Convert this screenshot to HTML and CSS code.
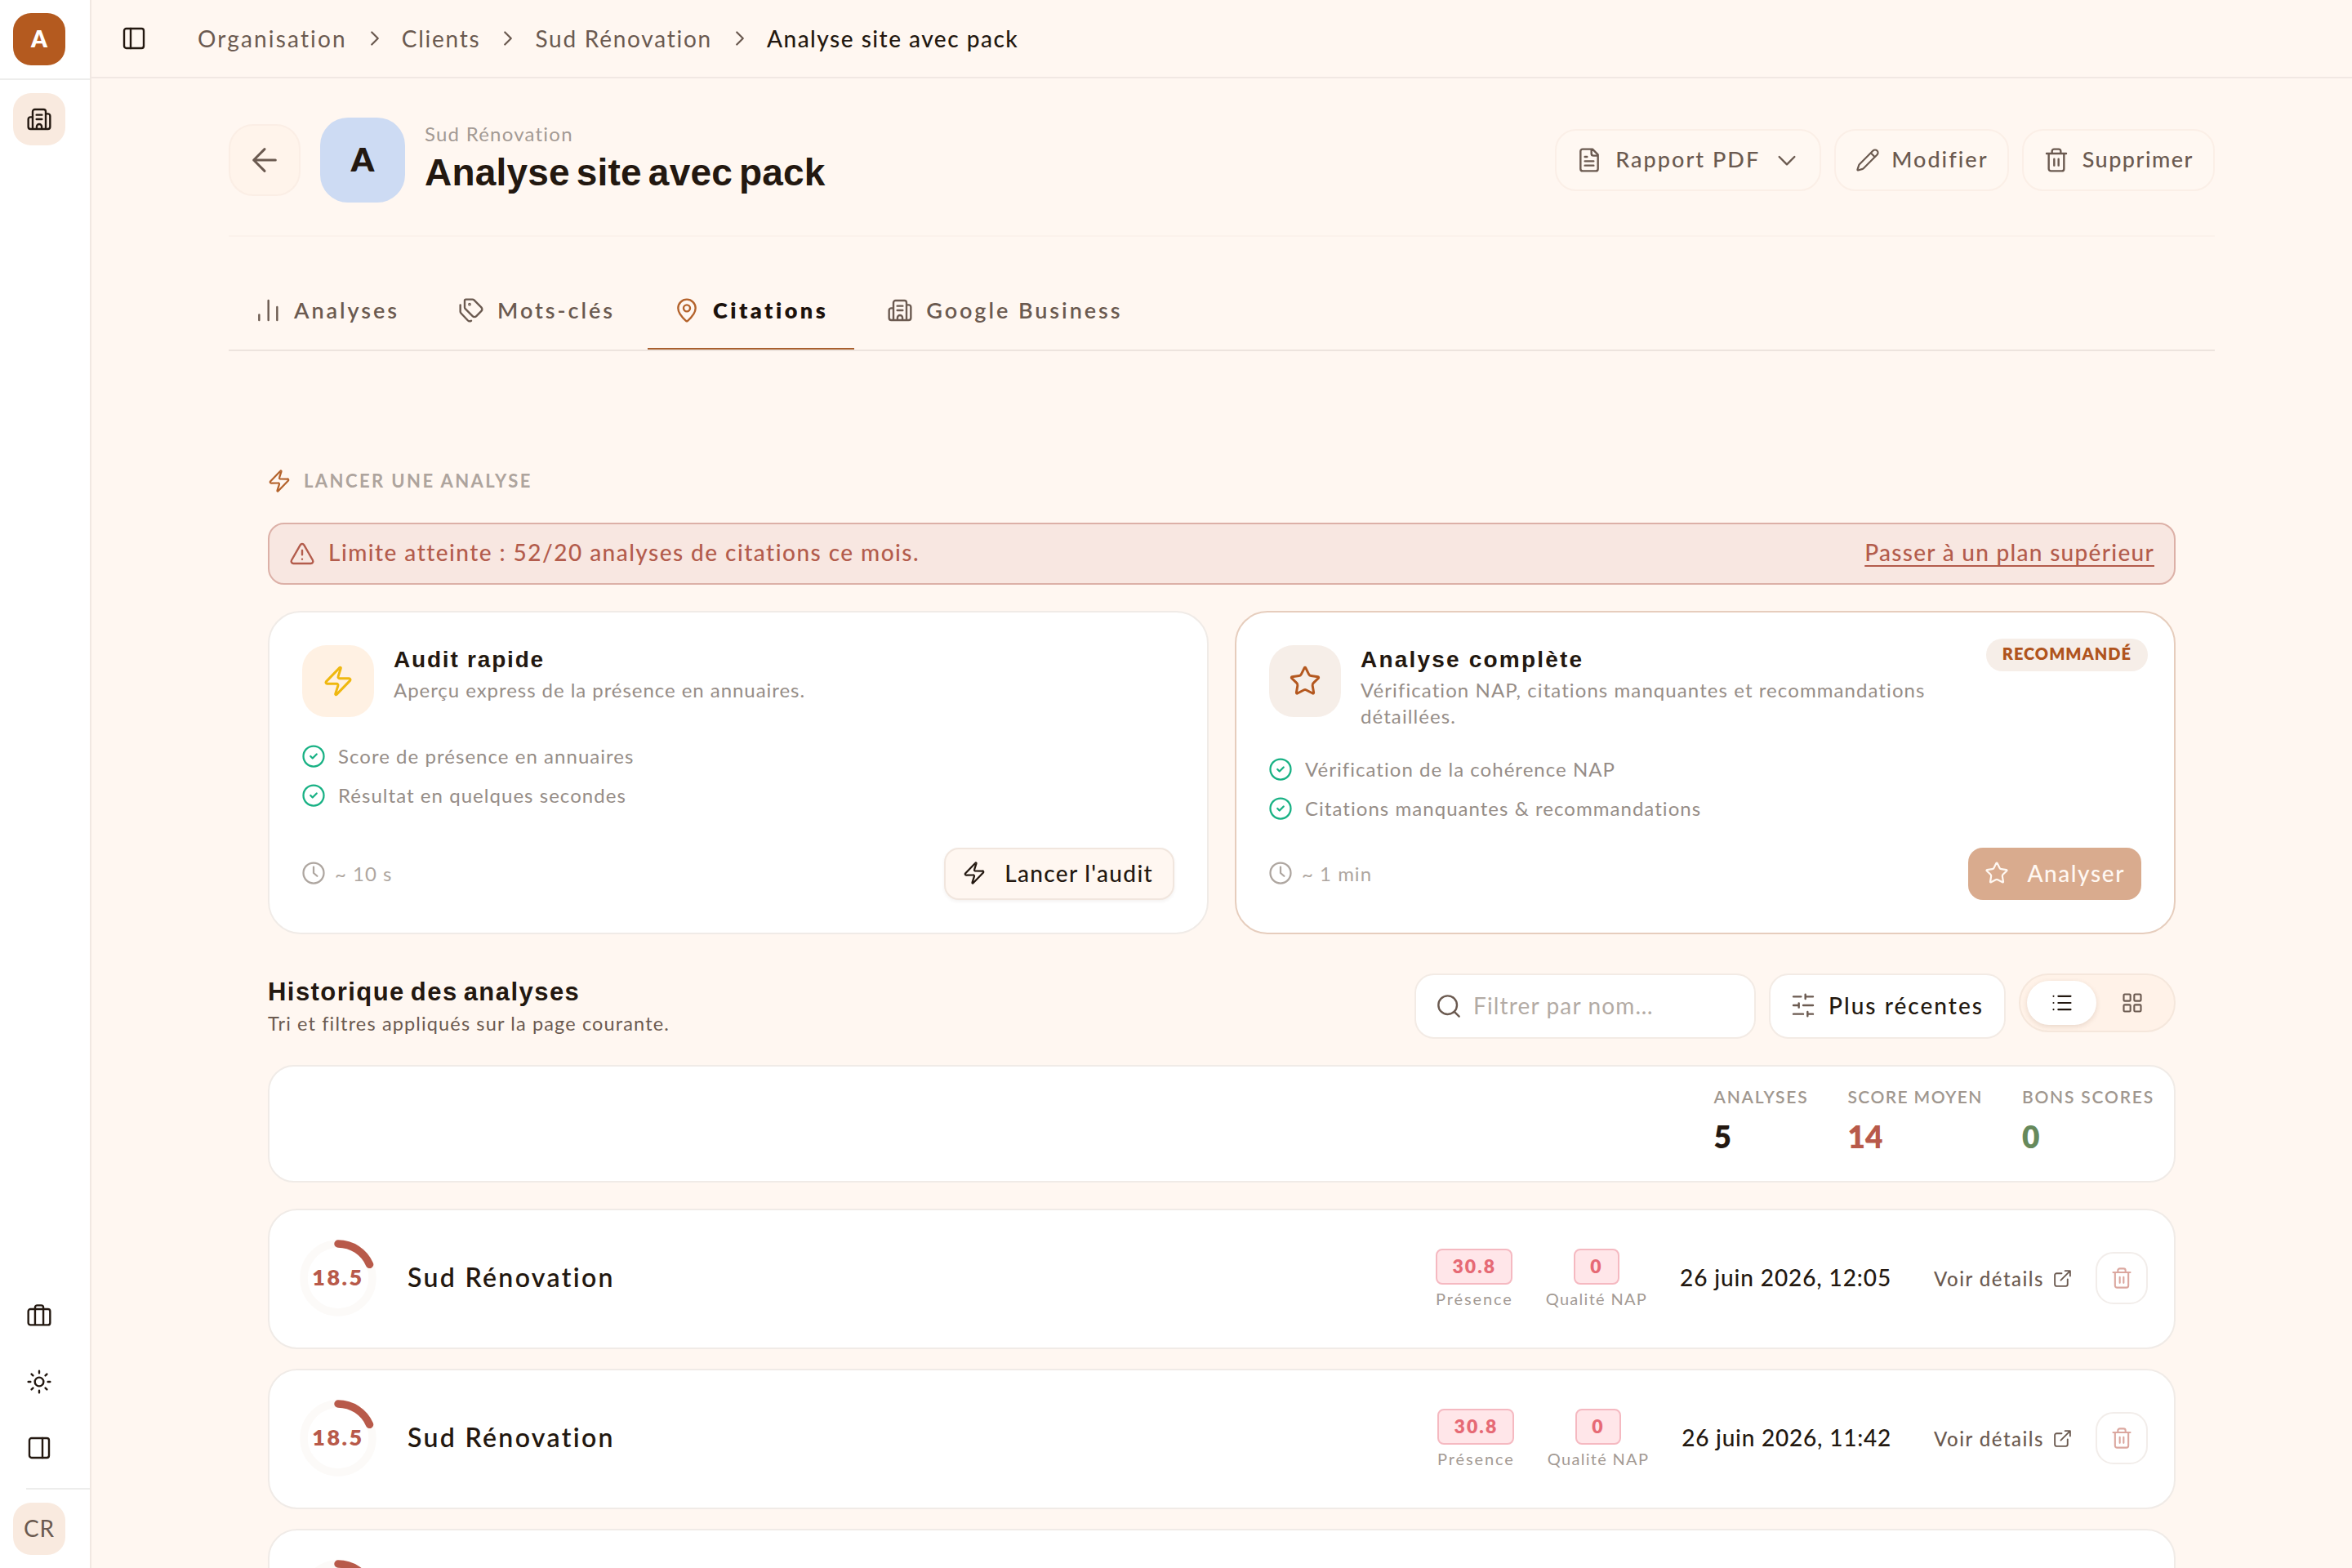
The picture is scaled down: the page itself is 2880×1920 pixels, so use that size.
FILE: index.html
```
<!DOCTYPE html>
<html lang="fr">
<head>
  <meta charset="UTF-8" />
  <meta name="viewport" content="width=device-width, initial-scale=1" />
  <title>Analyse site avec pack</title>
  <link rel="stylesheet" href="styles.css">
</head>
<body>

  <!-- Icônes partagées -->
  <svg class="sprite" aria-hidden="true">
    <symbol id="i-building" viewBox="0 0 24 24"><path d="M6 21V5a2 2 0 0 1 2-2h8a2 2 0 0 1 2 2v16M6 10H4a2 2 0 0 0-2 2v7a2 2 0 0 0 2 2h16a2 2 0 0 0 2-2V9a2 2 0 0 0-2-2h-2M9.7 21v-2.200a2.300 2.300 0 0 1 4.600 0V21M9.500 8h5M9.500 12h5"/></symbol>
    <symbol id="i-panel" viewBox="0 0 24 24"><rect x="3" y="3" width="18" height="18" rx="2"/><path d="M9 3v18"/></symbol>
    <symbol id="i-panel-right" viewBox="0 0 24 24"><rect x="3" y="3" width="18" height="18" rx="2"/><path d="M15 3v18"/></symbol>
    <symbol id="i-case" viewBox="0 0 24 24"><rect x="2" y="6" width="20" height="14.500" rx="2"/><path d="M8.200 20V4.500a2 2 0 0 1 2-2h3.600a2 2 0 0 1 2 2V20"/></symbol>
    <symbol id="i-sun" viewBox="0 0 24 24"><circle cx="12" cy="12" r="4"/><path d="M12 2v2M12 20v2M4.930 4.930l1.410 1.410M17.660 17.660l1.410 1.410M2 12h2M20 12h2M6.340 17.660l-1.410 1.410M19.070 4.930l-1.410 1.410"/></symbol>
    <symbol id="i-right" viewBox="0 0 24 24"><path d="m9 18 6-6-6-6"/></symbol>
    <symbol id="i-down" viewBox="0 0 24 24"><path d="m5 9 7 7 7-7"/></symbol>
    <symbol id="i-back" viewBox="0 0 24 24"><path d="m12 20-8-8 8-8M20 12H4"/></symbol>
    <symbol id="i-doc" viewBox="0 0 24 24"><path d="M15 2H6a2 2 0 0 0-2 2v16a2 2 0 0 0 2 2h12a2 2 0 0 0 2-2V7zM14 2v4a2 2 0 0 0 2 2h4M10 9H8M16 13H8M16 17H8"/></symbol>
    <symbol id="i-pencil" viewBox="0 0 24 24"><path d="M21.170 6.810a1 1 0 0 0-3.980-3.980L3.840 16.170a2 2 0 0 0-.500.830l-1.320 4.350a.500.500 0 0 0 .620.620l4.350-1.320a2 2 0 0 0 .830-.500zM15 5l4 4"/></symbol>
    <symbol id="i-trash" viewBox="0 0 24 24"><path d="M3 6h18M19 6v14a2 2 0 0 1-2 2H7a2 2 0 0 1-2-2V6M8 6V4a2 2 0 0 1 2-2h4a2 2 0 0 1 2 2v2M10 11v6M14 11v6"/></symbol>
    <symbol id="i-bars" viewBox="0 0 24 24"><path d="M4 21v-5M12.500 21V3M20.500 21V9"/></symbol>
    <symbol id="i-tags" viewBox="0 0 24 24"><path d="M13.170 2a2 2 0 0 1 1.420.590l6.700 6.700a2.430 2.430 0 0 1 0 3.420l-4.590 4.590a2.430 2.430 0 0 1-3.420 0L6.590 10.600A2 2 0 0 1 6 9.170V3a1 1 0 0 1 1-1zM2 7v6.200a2 2 0 0 0 .600 1.400l6.200 6.600c.9.900 2.200 1 3.200.3"/><circle cx="10.500" cy="6.500" r=".5"/></symbol>
    <symbol id="i-pin" viewBox="0 0 24 24"><path d="M20 10c0 5-5.540 10.190-7.400 11.800a1 1 0 0 1-1.200 0C9.540 20.190 4 15 4 10a8 8 0 0 1 16 0z"/><circle cx="12" cy="10" r="3"/></symbol>
    <symbol id="i-zap" viewBox="0 0 24 24"><path d="M4 14a1 1 0 0 1-.780-1.630l9.900-10.200a.500.500 0 0 1 .860.460l-1.920 6.020A1 1 0 0 0 13 10h7a1 1 0 0 1 .780 1.630l-9.900 10.200a.500.500 0 0 1-.860-.460l1.920-6.020A1 1 0 0 0 11 14z"/></symbol>
    <symbol id="i-alert" viewBox="0 0 24 24"><path d="m21.730 18-8-14a2 2 0 0 0-3.480 0l-8 14A2 2 0 0 0 4 21h16a2 2 0 0 0 1.730-3zM12 9v4M12 17h.010"/></symbol>
    <symbol id="i-star" viewBox="0 0 24 24"><path d="M11.530 2.300a.530.530 0 0 1 .950 0l2.310 4.680a2.120 2.120 0 0 0 1.600 1.160l5.160.760a.530.530 0 0 1 .290.900l-3.730 3.640a2.120 2.120 0 0 0-.610 1.880l.880 5.140a.530.530 0 0 1-.770.560l-4.620-2.430a2.120 2.120 0 0 0-1.970 0l-4.620 2.430a.530.530 0 0 1-.770-.560l.880-5.140a2.120 2.120 0 0 0-.610-1.880L2.160 9.800a.530.530 0 0 1 .290-.910l5.170-.750a2.120 2.120 0 0 0 1.600-1.160z"/></symbol>
    <symbol id="i-check" viewBox="0 0 24 24"><circle cx="12" cy="12" r="10"/><path d="m9 12 2 2 4-4"/></symbol>
    <symbol id="i-clock" viewBox="0 0 24 24"><circle cx="12" cy="12" r="10"/><path d="M12 6v6l3.500 3"/></symbol>
    <symbol id="i-search" viewBox="0 0 24 24"><circle cx="11" cy="11" r="8.500"/><path d="m21.500 21.500-4.400-4.400"/></symbol>
    <symbol id="i-sliders" viewBox="0 0 24 24"><path d="M21 4h-7M10 4H3M21 12h-9M8 12H3M21 20h-5M12 20H3M14 2v4M8 10v4M16 18v4"/></symbol>
    <symbol id="i-list" viewBox="0 0 24 24"><path d="M8 5h13M8 12h13M8 19h13M3 5h.010M3 12h.010M3 19h.010"/></symbol>
    <symbol id="i-grid" viewBox="0 0 24 24"><rect x="3" y="3" width="7" height="7" rx="1"/><rect x="14" y="3" width="7" height="7" rx="1"/><rect x="14" y="14" width="7" height="7" rx="1"/><rect x="3" y="14" width="7" height="7" rx="1"/></symbol>
    <symbol id="i-ext" viewBox="0 0 24 24"><path d="M15 3h6v6M10 14 21 3M18 13v6a2 2 0 0 1-2 2H5a2 2 0 0 1-2-2V8a2 2 0 0 1 2-2h6"/></symbol>
  </svg>

  <!-- Barre latérale -->
  <aside class="sidebar">
    <div class="sidebar-top">
      <div class="org-logo">A</div>
    </div>
    <nav class="sidebar-nav">
      <a class="nav-item active"><svg class="icon"><use href="#i-building"/></svg></a>
    </nav>
    <div class="sidebar-tools">
      <svg class="icon"><use href="#i-case"/></svg>
      <svg class="icon"><use href="#i-sun"/></svg>
      <svg class="icon"><use href="#i-panel-right"/></svg>
    </div>
    <div class="sidebar-user">
      <div class="user">CR</div>
    </div>
  </aside>

  <div class="page">
    <header class="topbar">
      <svg class="icon toggle-icon"><use href="#i-panel"/></svg>
      <nav class="breadcrumb">
        <a class="crumb-org">Organisation</a>
        <svg class="icon"><use href="#i-right"/></svg>
        <a>Clients</a>
        <svg class="icon"><use href="#i-right"/></svg>
        <a>Sud Rénovation</a>
        <svg class="icon"><use href="#i-right"/></svg>
        <span class="current">Analyse site avec pack</span>
      </nav>
    </header>

    <main>
      <!-- En-tête du site -->
      <div class="site-header">
        <a class="back-btn"><svg class="icon"><use href="#i-back"/></svg></a>
        <div class="site-avatar">A</div>
        <div class="site-title">
          <p>Sud Rénovation</p>
          <h1>Analyse site avec pack</h1>
        </div>
        <div class="site-actions">
          <button class="btn"><svg class="icon"><use href="#i-doc"/></svg><span class="t-report">Rapport PDF</span><svg class="icon chevron"><use href="#i-down"/></svg></button>
          <button class="btn"><svg class="icon small"><use href="#i-pencil"/></svg><span class="t-edit">Modifier</span></button>
          <button class="btn"><svg class="icon"><use href="#i-trash"/></svg><span class="t-delete">Supprimer</span></button>
        </div>
      </div>

      <!-- Onglets -->
      <nav class="tabs">
        <a class="tab"><svg class="icon"><use href="#i-bars"/></svg>Analyses</a>
        <a class="tab"><svg class="icon"><use href="#i-tags"/></svg>Mots-clés</a>
        <a class="tab active"><svg class="icon"><use href="#i-pin"/></svg>Citations</a>
        <a class="tab"><svg class="icon"><use href="#i-building"/></svg>Google Business</a>
      </nav>

      <section class="panel">
        <h2 class="section-label"><svg class="icon"><use href="#i-zap"/></svg>Lancer une analyse</h2>

        <div class="alert">
          <svg class="icon"><use href="#i-alert"/></svg>
          <span>Limite atteinte : 52/20 analyses de citations ce mois.</span>
          <a>Passer à un plan supérieur</a>
        </div>

        <div class="offers">
          <article class="offer">
            <div class="offer-head">
              <div class="offer-icon yellow"><svg class="icon"><use href="#i-zap"/></svg></div>
              <div>
                <h3>Audit rapide</h3>
                <p>Aperçu express de la présence en annuaires.</p>
              </div>
            </div>
            <ul>
              <li><svg class="icon"><use href="#i-check"/></svg>Score de présence en annuaires</li>
              <li><svg class="icon"><use href="#i-check"/></svg>Résultat en quelques secondes</li>
            </ul>
            <div class="offer-foot">
              <span class="duration"><svg class="icon"><use href="#i-clock"/></svg>~ 10 s</span>
              <button class="run-btn light"><svg class="icon"><use href="#i-zap"/></svg>Lancer l'audit</button>
            </div>
          </article>

          <article class="offer recommended">
            <span class="tag">Recommandé</span>
            <div class="offer-head">
              <div class="offer-icon brown"><svg class="icon"><use href="#i-star"/></svg></div>
              <div>
                <h3>Analyse complète</h3>
                <p>Vérification NAP, citations manquantes et recommandations détaillées.</p>
              </div>
            </div>
            <ul>
              <li><svg class="icon"><use href="#i-check"/></svg>Vérification de la cohérence NAP</li>
              <li><svg class="icon"><use href="#i-check"/></svg>Citations manquantes &amp; recommandations</li>
            </ul>
            <div class="offer-foot">
              <span class="duration"><svg class="icon"><use href="#i-clock"/></svg>~ 1 min</span>
              <button class="run-btn solid"><svg class="icon"><use href="#i-star"/></svg>Analyser</button>
            </div>
          </article>
        </div>

        <!-- Historique -->
        <div class="history-head">
          <div class="history-title">
            <h2>Historique des analyses</h2>
            <p>Tri et filtres appliqués sur la page courante.</p>
          </div>
          <label class="search">
            <svg class="icon"><use href="#i-search"/></svg>
            <input type="text" placeholder="Filtrer par nom…" />
          </label>
          <button class="sort"><svg class="icon"><use href="#i-sliders"/></svg>Plus récentes</button>
          <div class="view-toggle">
            <span class="view active"><svg class="icon"><use href="#i-list"/></svg></span>
            <span class="view"><svg class="icon"><use href="#i-grid"/></svg></span>
          </div>
        </div>

        <div class="summary">
          <div class="total"><span>Analyses</span><strong>5</strong></div>
          <div class="total red"><span>Score moyen</span><strong>14</strong></div>
          <div class="total green"><span>Bons scores</span><strong>0</strong></div>
        </div>

        <div class="rows">
          <div class="row">
            <div class="ring">
              <svg viewBox="0 0 96 96"><circle class="track" cx="48" cy="48" r="42"/><circle class="value" cx="48" cy="48" r="42" pathLength="100"/></svg>
              <span>18.5</span>
            </div>
            <h3>Sud Rénovation</h3>
            <div class="metric"><b>30.8</b><small>Présence</small></div>
            <div class="metric nap"><b>0</b><small>Qualité NAP</small></div>
            <time>26 juin 2026, 12:05</time>
            <a class="details">Voir détails<svg class="icon"><use href="#i-ext"/></svg></a>
            <button class="delete"><svg class="icon"><use href="#i-trash"/></svg></button>
          </div>
          <div class="row">
            <div class="ring">
              <svg viewBox="0 0 96 96"><circle class="track" cx="48" cy="48" r="42"/><circle class="value" cx="48" cy="48" r="42" pathLength="100"/></svg>
              <span>18.5</span>
            </div>
            <h3>Sud Rénovation</h3>
            <div class="metric"><b>30.8</b><small>Présence</small></div>
            <div class="metric nap"><b>0</b><small>Qualité NAP</small></div>
            <time class="narrow">26 juin 2026, 11:42</time>
            <a class="details">Voir détails<svg class="icon"><use href="#i-ext"/></svg></a>
            <button class="delete"><svg class="icon"><use href="#i-trash"/></svg></button>
          </div>
          <div class="row">
            <div class="ring">
              <svg viewBox="0 0 96 96"><circle class="track" cx="48" cy="48" r="42"/><circle class="value" cx="48" cy="48" r="42" pathLength="100"/></svg>
            </div>
          </div>
        </div>
      </section>
    </main>
  </div>

</body>
</html>
```
FILE: styles.css
```
* {
  box-sizing: border-box;
}
body {
  margin: 0;
  height: 1920px;
  overflow: hidden;
  display: flex;
  background-color: #fff7f1;
  color: #231810;
  font-family: Lato, "Noto Sans", sans-serif;
  font-size: 28px;
}
h1, h2, h3, p, ul {
  margin: 0;
  padding: 0;
}
button, input {
  font: inherit;
  color: inherit;
  background: none;
  border: none;
  padding: 0;
}
.sprite {
  display: none;
}
.icon {
  width: 32px;
  height: 32px;
  flex: none;
  fill: none;
  stroke: currentColor;
  stroke-width: 1.8;
  stroke-linecap: round;
  stroke-linejoin: round;
}

/* Barre latérale */
.sidebar {
  width: 112px;
  flex: none;
  background: #fff;
  border-right: 2px solid #f1e8e2;
  display: flex;
  flex-direction: column;
}
.sidebar-top {
  height: 98px;
  padding: 16px;
  border-bottom: 2px solid #ededec;
}
.org-logo, .nav-item, .user {
  width: 64px;
  height: 64px;
  border-radius: 22px;
  display: flex;
  align-items: center;
  justify-content: center;
}
.org-logo {
  background: #b45a1f;
  color: #fff;
  font-weight: 800;
  padding-bottom: 3px;
}
.sidebar-nav {
  padding: 16px;
  flex: 1;
}
.nav-item.active {
  background: #f9eadf;
}
.sidebar-tools {
  display: flex;
  flex-direction: column;
  gap: 49px;
  padding: 0 32px 33px;
}
.sidebar-user {
  margin-left: 32px;
  height: 98px;
  border-top: 2px solid #ededec;
  padding-top: 16px;
}
.user {
  margin-left: -16px;
  background: #f9eadf;
  color: #6b5a50;
  letter-spacing: 1px;
  padding-bottom: 3px;
}

/* Barre du haut */
.page {
  flex: 1;
}
.topbar {
  height: 96px;
  border-bottom: 2px solid #f1e8e3;
  display: flex;
  align-items: center;
  padding-left: 36px;
}
.breadcrumb {
  display: flex;
  align-items: center;
  margin-left: 62px;
  color: #6b5a50;
  letter-spacing: 1.75px;
}
.breadcrumb a, .breadcrumb span {
  padding-bottom: 1px;
}
.breadcrumb .crumb-org {
  letter-spacing: 2.15px;
}
.breadcrumb .icon {
  width: 30px;
  height: 30px;
  margin: 0 18px 0 19px;
}
.breadcrumb .current {
  color: #231810;
  font-weight: 500;
  letter-spacing: 1.5px;
}

main {
  width: 2432px;
  margin: 0 auto;
}

/* En-tête du site */
.site-header {
  display: flex;
  align-items: center;
  padding: 48px 0 40px;
  border-bottom: 2px solid #fcf2eb;
}
.back-btn {
  width: 88px;
  height: 88px;
  border: 2px solid #fbeee5;
  border-radius: 30px;
  background: #fff4eb;
  color: #6b5a50;
  display: flex;
  align-items: center;
  justify-content: center;
}
.back-btn .icon {
  width: 40px;
  height: 40px;
}
.site-avatar {
  width: 104px;
  height: 104px;
  margin: 0 24px;
  border-radius: 34px;
  background: #cddbf3;
  display: flex;
  align-items: center;
  justify-content: center;
  font-size: 40px;
  font-weight: 800;
  padding-bottom: 3px;
}
.site-title {
  padding-bottom: 5px;
}
.site-title p {
  color: #a39a94;
  font-size: 24px;
  line-height: 32px;
  letter-spacing: 1.23px;
}
.site-title h1 {
  font: bold 46px/56px "Liberation Sans", sans-serif;
  letter-spacing: 0.2px;
  word-spacing: -5px;
  margin-top: 3px;
}
.site-actions {
  margin-left: auto;
  display: flex;
  gap: 16px;
}
.btn {
  height: 76px;
  padding: 0 24px;
  border: 2px solid #fbefe7;
  border-radius: 26px;
  background: #fff8f2;
  color: #6b5a50;
  font-size: 27px;
  font-weight: 500;
  display: flex;
  align-items: center;
  gap: 16px;
}
.btn span {
  padding-bottom: 4px;
}
.btn .small {
  width: 30px;
  height: 30px;
  margin-right: -2px;
}
.btn .small + span {
  margin-right: -1px;
}
.btn .chevron {
  margin-left: 1px;
}
.t-report, .t-edit {
  letter-spacing: 2.03px;
}
.t-delete {
  letter-spacing: 1.5px;
}

/* Onglets */
.tabs {
  display: flex;
  gap: 8px;
  height: 92px;
  margin-top: 48px;
  border-bottom: 2px solid #ede4de;
}
.tab {
  display: flex;
  align-items: center;
  gap: 16px;
  padding: 0 32px 5px;
  height: 90px;
  border-bottom: 2px solid transparent;
  color: #6b5a50;
  font-size: 27px;
  font-weight: 600;
  letter-spacing: 2.95px;
}
.tab.active {
  color: #1c120c;
  border-bottom-color: #a9602f;
  font-weight: 800;
  letter-spacing: 3.5px;
}
.tab.active .icon {
  color: #b4632c;
}

.panel {
  padding: 144px 48px 0;
}
.section-label {
  display: flex;
  align-items: center;
  gap: 15px;
  margin-bottom: 34px;
  color: #aea49d;
  font-size: 22px;
  line-height: 30px;
  padding-bottom: 2px;
  font-weight: 700;
  letter-spacing: 2.42px;
  text-transform: uppercase;
}
.section-label .icon {
  width: 30px;
  height: 30px;
  margin-left: -1px;
  color: #b4632c;
}

/* Limite du plan */
.alert {
  display: flex;
  align-items: center;
  gap: 16px;
  height: 76px;
  padding: 0 24px;
  border: 2px solid #dcb0a7;
  border-radius: 20px;
  background: #f8e7e1;
  color: #b35c4c;
  font-weight: 500;
  letter-spacing: 1.46px;
}
.alert a {
  margin-left: auto;
  text-decoration: underline;
  text-decoration-thickness: 2px;
  text-underline-offset: 5px;
  letter-spacing: 1.29px;
}
.alert span, .alert a {
  padding-bottom: 4px;
}

/* Cartes d'analyse */
.offers {
  display: grid;
  grid-template-columns: 1fr 1fr;
  gap: 32px;
  margin: 32px 0 48px;
}
.offer {
  position: relative;
  height: 396px;
  padding: 40px;
  border: 2px solid #f0ebe7;
  border-radius: 40px;
  background: #fff;
  display: flex;
  flex-direction: column;
}
.offer.recommended {
  border-color: #e6cdbd;
}
.offer-head {
  display: flex;
  align-items: flex-start;
  gap: 24px;
}
.recommended .offer-head {
  padding-right: 192px;
}
.offer-icon {
  width: 88px;
  height: 88px;
  flex: none;
  border-radius: 30px;
  display: flex;
  align-items: center;
  justify-content: center;
}
.offer-icon .icon {
  width: 40px;
  height: 40px;
}
.offer-icon.yellow {
  background: #fff1e3;
  color: #efb810;
}
.offer-icon.brown {
  background: #f6eee8;
  color: #b4581f;
}
.offer h3 {
  font: bold 28px/36px "Liberation Sans", sans-serif;
  letter-spacing: 1.8px;
  white-space: nowrap;
}
.offer.recommended h3 {
  letter-spacing: 2.2px;
}
.offer-head p {
  margin-top: 3px;
  color: #968d87;
  font-size: 24px;
  line-height: 32px;
  letter-spacing: 0.95px;
}
.recommended .offer-head p {
  letter-spacing: 1.08px;
}
.offer-head + ul {
  margin-top: 32px;
}
.recommended .offer-head + ul {
  margin-top: 33px;
}
.offer ul {
  list-style: none;
  display: flex;
  flex-direction: column;
  gap: 16px;
}
.offer li {
  display: flex;
  align-items: center;
  gap: 15px;
  height: 32px;
  color: #968d87;
  font-size: 24px;
  line-height: 30px;
  letter-spacing: 1.04px;
}
.offer li .icon, .duration .icon {
  width: 30px;
  height: 30px;
  margin-left: -1px;
}
.offer li .icon {
  color: #18b184;
}
.offer-foot {
  margin-top: auto;
  display: flex;
  align-items: center;
  justify-content: space-between;
}
.duration {
  display: flex;
  align-items: center;
  gap: 11px;
  color: #aea6a0;
  font-size: 24px;
  letter-spacing: 1px;
  padding-bottom: 2px;
}
.run-btn {
  height: 64px;
  padding: 0 24px 3px 20px;
  border-radius: 18px;
  display: flex;
  align-items: center;
  gap: 22px;
  font-weight: 500;
  letter-spacing: 1.33px;
}
.run-btn.light {
  border: 2px solid #f1e6de;
  background: #fff7f1;
  box-shadow: 0 2px 4px rgba(60, 30, 10, 0.06);
}
.run-btn.solid {
  background: #d9ab8e;
  color: #fff8f2;
  letter-spacing: 1.59px;
  padding-right: 20px;
}
.run-btn .icon {
  width: 30px;
  height: 30px;
}
.tag {
  position: absolute;
  top: 32px;
  right: 32px;
  height: 40px;
  padding: 0 20px;
  border-radius: 20px;
  background: #f6eee8;
  color: #b0541d;
  font-size: 20px;
  line-height: 37px;
  font-weight: 800;
  letter-spacing: 1px;
  text-transform: uppercase;
}

/* Historique */
.history-head {
  display: flex;
  gap: 16px;
  height: 80px;
}
.history-title {
  margin-right: auto;
}
.history-title h2 {
  font: bold 31px/40px "Liberation Sans", sans-serif;
  letter-spacing: 1.45px;
  word-spacing: -3px;
  margin-top: 3px;
}
.history-title p {
  color: #6b5a50;
  font-size: 23.5px;
  line-height: 36px;
  letter-spacing: 1.14px;
}
.search, .sort {
  display: flex;
  align-items: center;
  border: 2px solid #f3ebe5;
  border-radius: 24px;
  background: #fff;
  height: 80px;
}
.search {
  width: 418px;
  padding: 0 24px;
  gap: 14px;
  color: #6b5a50;
}
.search input {
  width: 300px;
  letter-spacing: 1.15px;
  padding-bottom: 3px;
}
.search input::placeholder {
  color: #b3aba5;
}
.sort {
  width: 290px;
  padding: 0 24px 2px;
  gap: 15px;
  font-weight: 500;
  letter-spacing: 2.04px;
  white-space: nowrap;
}
.sort .icon {
  color: #6b5a50;
}
.view-toggle {
  display: flex;
  align-items: center;
  width: 192px;
  height: 72px;
  padding: 0 8px;
  border: 2px solid #f5e7dc;
  border-radius: 36px;
  background: #fff2e8;
}
.view {
  width: 88px;
  height: 54px;
  border-radius: 27px;
  display: flex;
  align-items: center;
  justify-content: center;
  color: #6b5a50;
}
.view.active {
  width: 86px;
  background: #fff;
  color: #231810;
  box-shadow: 0 2px 6px rgba(90, 50, 20, 0.14);
}
.view .icon {
  width: 28px;
  height: 28px;
}

.summary {
  display: flex;
  justify-content: flex-end;
  gap: 48px;
  height: 144px;
  margin: 32px 0;
  padding: 24px 24px 0;
  border: 2px solid #f0ebe7;
  border-radius: 32px;
  background: #fff;
}
.total {
  display: flex;
  flex-direction: column;
  letter-spacing: 1.8px;
}
.total.red {
  letter-spacing: 1.4px;
}
.total span {
  color: #a0978f;
  font-size: 21px;
  line-height: 26px;
  font-weight: 600;
  text-transform: uppercase;
}
.total strong {
  margin-top: 14px;
  font-size: 37px;
  line-height: 44px;
  font-weight: 800;
  letter-spacing: 0;
}
.red strong {
  color: #b85a4a;
}
.green strong {
  color: #66895b;
}

.rows {
  display: flex;
  flex-direction: column;
  gap: 24px;
}
.row {
  display: flex;
  align-items: center;
  flex: none;
  height: 172px;
  padding: 0 32px 2px 36px;
  border: 2px solid #f0ebe7;
  border-radius: 36px;
  background: #fff;
}
.ring {
  display: grid;
  place-items: center;
  width: 96px;
  height: 96px;
}
.ring svg, .ring span {
  grid-area: 1 / 1;
}
.ring svg {
  width: 96px;
  height: 96px;
  transform: rotate(-90deg);
  fill: none;
  stroke-width: 9.5;
}
.ring .track {
  stroke: #fcfaf8;
}
.ring .value {
  stroke: #b85a4a;
  stroke-linecap: round;
  stroke-dasharray: 18.5 100;
}
.ring span {
  color: #b85a4a;
  font-size: 27px;
  font-weight: 800;
  letter-spacing: 2.5px;
  padding-bottom: 3px;
}
.row h3 {
  margin: 0 auto 0 37px;
  font-size: 32px;
  font-weight: 600;
  letter-spacing: 2.33px;
  padding-bottom: 3px;
}
.metric {
  display: flex;
  flex-direction: column;
  align-items: center;
  margin-right: 40px;
}
.metric b {
  height: 44px;
  padding: 0 18px;
  border: 2px solid #f5b9c1;
  border-radius: 8px;
  background: #ffe6e9;
  color: #e66a75;
  font-size: 23px;
  line-height: 38px;
  font-weight: 800;
  letter-spacing: 2.1px;
}
.metric small {
  margin-top: 5px;
  color: #a39a94;
  font-size: 20px;
  line-height: 24px;
  letter-spacing: 1.9px;
}
.metric.nap small {
  letter-spacing: 1.3px;
}
.row time {
  font-weight: 500;
  letter-spacing: 0.89px;
  padding-bottom: 3px;
}
.row time.narrow {
  letter-spacing: 0.78px;
}
.details {
  display: flex;
  align-items: center;
  gap: 10px;
  margin: 0 28px 0 52px;
  color: #6b5a50;
  font-size: 24px;
  font-weight: 500;
  letter-spacing: 1.48px;
}
.details .icon {
  width: 25px;
  height: 25px;
}
.delete {
  width: 64px;
  height: 64px;
  border: 2px solid #f2edea;
  border-radius: 22px;
  display: flex;
  align-items: center;
  justify-content: center;
  color: #dba79f;
}
.delete .icon {
  width: 28px;
  height: 28px;
}
```
